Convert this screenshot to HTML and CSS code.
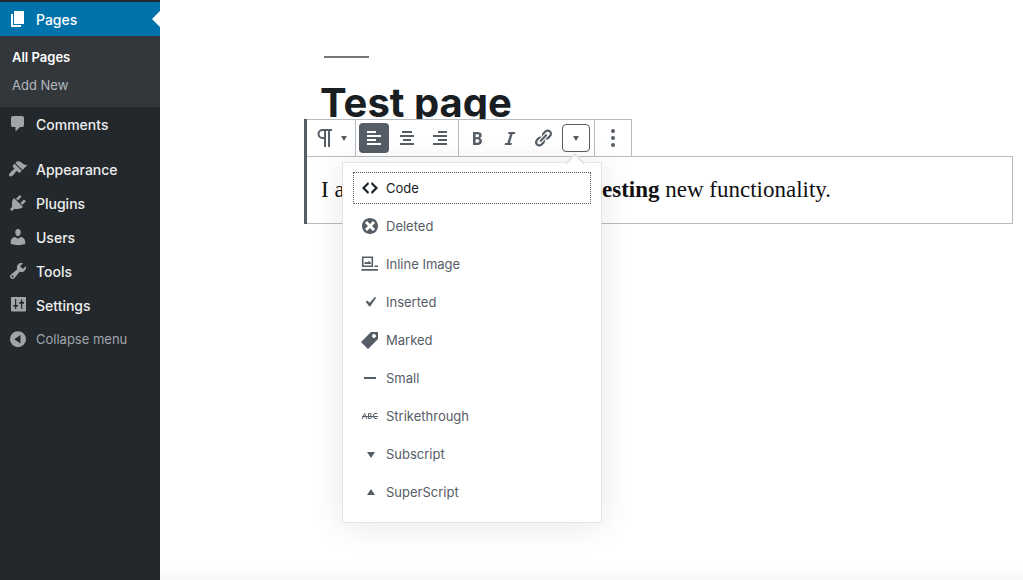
FILE: index.html
```html
<!DOCTYPE html>
<html lang="en">
<head>
<meta charset="utf-8">
<meta name="viewport" content="width=device-width, initial-scale=1">
<title>Edit Page</title>
<link rel="stylesheet" href="styles.css">
</head>
<body>
<div class="app">
  <nav class="sidebar" aria-label="Main menu">
    <a class="nav-item nav-item--current" href="#"><svg class="icon" viewBox="0 0 20 20"><path d="M6 15V2h10v13H6zm-1 1h8v2H3V5h2v11z"/></svg>Pages</a>
    <div class="submenu">
      <a class="submenu-item submenu-item--current" href="#">All Pages</a>
      <a class="submenu-item" href="#">Add New</a>
    </div>
    <a class="nav-item" href="#"><svg class="icon" viewBox="0 0 20 20"><path d="M5 2h9q.82 0 1.410.59T16 4v7q0 .82-.59 1.410T14 13h-2l-4.500 4.500V13H5q-.82 0-1.410-.59T3 11V4q0-.82.59-1.410T5 2z"/></svg>Comments</a>
    <div class="nav-gap"></div>
    <a class="nav-item" href="#"><svg class="icon" viewBox="0 0 20 20"><path d="M14.48 11.06L7.41 3.99l1.5-1.5c.5-.56 2.3-.47 3.51.32 1.21.8 1.43 1.28 2.91 2.1 1.18.64 2.45 1.26 4.45.85zm-.71.71L6.7 4.7 4.93 6.47c-.39.39-.39 1.02 0 1.41l1.06 1.06c.39.39.39 1.03 0 1.42-.6.6-1.43 1.11-2.21 1.69-.35.26-.7.53-1.01.84C1.43 14.23.4 16.08 1.4 17.07c.99 1 2.84-.03 4.18-1.36.31-.31.58-.66.85-1.02.57-.78 1.08-1.61 1.69-2.21.39-.39 1.02-.39 1.41 0l1.06 1.06c.39.39 1.02.39 1.41 0z"/></svg>Appearance</a>
    <a class="nav-item" href="#"><svg class="icon" viewBox="0 0 20 20"><path d="M13.11 4.36L9.87 7.6 8 5.73l3.24-3.24c.35-.34 1.05-.2 1.56.32.52.51.66 1.21.31 1.55zm-8 1.77l.91-1.12 9.01 9.01-1.19.84c-.71.71-2.63 1.16-3.82 1.16H6.14L4.9 17.26c-.59.59-1.54.59-2.12 0-.59-.58-.59-1.53 0-2.12l1.24-1.24v-3.88c0-1.13.4-3.19 1.09-3.89zm7.26 3.97l3.24-3.24c.34-.35 1.04-.21 1.55.31.52.51.66 1.21.31 1.55l-3.24 3.25z"/></svg>Plugins</a>
    <a class="nav-item" href="#"><svg class="icon" viewBox="0 0 20 20"><path d="M10 9.25c-2.27 0-2.73-3.44-2.73-3.44C7 4.02 7.82 2 9.97 2c2.16 0 2.98 2.02 2.71 3.81 0 0-.41 3.44-2.68 3.44zm0 2.57L12.72 10c2.39 0 4.52 2.33 4.52 4.53v2.49s-3.65 1.13-7.24 1.13c-3.65 0-7.24-1.13-7.24-1.13v-2.49c0-2.25 1.94-4.48 4.47-4.48z"/></svg>Users</a>
    <a class="nav-item" href="#"><svg class="icon" viewBox="0 0 20 20"><path d="M16.68 9.77c-1.34 1.34-3.3 1.67-4.95.99l-5.41 6.52c-.99.99-2.59.99-3.58 0s-.99-2.59 0-3.57l6.52-5.42c-.68-1.65-.35-3.61.99-4.95 1.28-1.28 3.12-1.62 4.72-1.06l-2.89 2.89 2.82 2.82 2.86-2.87c.53 1.58.18 3.39-1.08 4.65zM3.81 16.21c.4.39 1.04.39 1.43 0 .4-.4.4-1.04 0-1.43-.39-.4-1.03-.4-1.43 0-.39.39-.39 1.03 0 1.43z"/></svg>Tools</a>
    <a class="nav-item" href="#"><svg class="icon" viewBox="0 0 20 20"><path d="M4 2h13q1 0 1 1v12.500q0 1-1 1H4q-1 0-1-1V3q0-1 1-1z"/><g class="icon-cut"><path d="M7 4h1.200v6H10v1.500H8.200V14H7v-2.500H5.200V10H7zM13 14h1.200V8.500H16V7h-1.800V4.500H13V7h-1.800v1.500H13z"/><path d="M5.200 10h4.800L7.600 12.600zM11.200 8.500H16l-2.400-2.800z"/></g></svg>Settings</a>
    <button class="nav-item nav-item--collapse" type="button"><svg class="icon" viewBox="0 0 20 20"><path fill-rule="evenodd" d="M10 2.200a8 8 0 1 1 0 16 8 8 0 1 1 0-16zM12.500 6v8.400L6.300 10.200z"/></svg>Collapse menu</button>
  </nav>

  <main class="editor">
    <hr class="title-rule">
    <h1 class="title">Test page</h1>
    <section class="block">
      <div class="toolbar" role="toolbar" aria-label="Block tools">
        <div class="group group--type">
          <button class="type-button" type="button" aria-label="Change block type">
            <svg class="icon" viewBox="0 0 20 20"><path class="line line--bold" d="M17 2H7.500a4 4 0 0 0 0 8H9M10 2V19M14 2V19"/></svg>
            <svg class="caret" viewBox="0 0 6 5"><path d="M0 0h6L3 5z"/></svg>
          </button>
        </div>
        <div class="group">
          <button class="tool" type="button" aria-label="Align left" aria-pressed="true"><span class="tool-face"><svg class="icon" viewBox="0 0 20 20"><path d="M3 3h9v2H3zM3 7h14v2H3zM3 11h9v2H3zM3 15h14v2H3z"/></svg></span></button>
          <button class="tool" type="button" aria-label="Align center"><span class="tool-face"><svg class="icon" viewBox="0 0 20 20"><path d="M5 3h10v2H5zM3 7h14v2H3zM6 11h8v2H6zM3 15h14v2H3z"/></svg></span></button>
          <button class="tool" type="button" aria-label="Align right"><span class="tool-face"><svg class="icon" viewBox="0 0 20 20"><path d="M8 3h9v2H8zM3 7h14v2H3zM8 11h9v2H8zM3 15h14v2H3z"/></svg></span></button>
        </div>
        <div class="group">
          <button class="tool" type="button" aria-label="Bold"><span class="tool-face"><svg class="icon" viewBox="0 0 20 20"><path d="M6 4v13h4.540c1.370 0 2.460-.33 3.260-1 .8-.66 1.200-1.580 1.200-2.770 0-.84-.17-1.510-.51-2.010s-.9-.85-1.670-1.030v-.09c.57-.1 1.020-.4 1.360-.9s.51-1.130.51-1.910c0-1.140-.39-1.980-1.170-2.500C12.750 4.260 11.500 4 9.780 4H6zm2.570 5.150V6.260h1.360c.73 0 1.270.11 1.610.32.34.22.51.58.51 1.070 0 .54-.16.92-.47 1.150s-.82.35-1.510.35h-1.500zm0 2.190h1.600c1.440 0 2.160.53 2.160 1.610 0 .6-.17 1.050-.51 1.340s-.86.43-1.570.43H8.570v-3.380z"/></svg></span></button>
          <button class="tool" type="button" aria-label="Italic"><span class="tool-face"><svg class="icon" viewBox="0 0 20 20"><path d="M14.780 6h-2.130l-2.800 9h2.120l-.62 2H4.600l.62-2h2.140l2.800-9H8.030l.62-2h6.750z"/></svg></span></button>
          <button class="tool" type="button" aria-label="Link"><span class="tool-face"><svg class="icon" viewBox="0 0 20 20"><path d="M17.740 2.760c1.680 1.690 1.680 4.410 0 6.100l-1.530 1.520c-1.120 1.120-2.700 1.470-4.140 1.090l2.620-2.610.76-.77.76-.76c.84-.84.84-2.200 0-3.040-.84-.85-2.200-.85-3.040 0l-.77.76-3.380 3.380c-.37-1.440-.02-3.020 1.100-4.140l1.520-1.530c1.690-1.680 4.420-1.680 6.100 0zM8.590 13.430l5.340-5.340c.42-.42.42-1.100 0-1.520-.44-.43-1.130-.39-1.530 0l-5.330 5.340c-.42.42-.42 1.100 0 1.520.44.43 1.130.39 1.520 0zm-.76 2.290l4.140-4.150c.38 1.440.03 3.020-1.090 4.140l-1.520 1.530c-1.690 1.680-4.410 1.680-6.100 0-1.680-1.680-1.680-4.420 0-6.100l1.530-1.520c1.120-1.120 2.700-1.470 4.140-1.100l-4.140 4.150c-.85.84-.85 2.200 0 3.050.84.84 2.200.84 3.040 0z"/></svg></span></button>
          <div class="more-formats">
            <button class="tool tool--outlined" type="button" aria-label="More rich text controls" aria-haspopup="menu" aria-expanded="true"><span class="tool-face"><svg class="caret" viewBox="0 0 6 5"><path d="M0 0h6L3 5z"/></svg></span></button>
            <div class="menu" role="menu">
              <button class="menu-item menu-item--focus" type="button" role="menuitem"><svg class="icon" viewBox="0 0 20 20"><path d="M9 6l-4 4 4 4-1 2-6-6 6-6zm2 8l4-4-4-4 1-2 6 6-6 6z"/></svg>Code</button>
              <button class="menu-item" type="button" role="menuitem"><svg class="icon" viewBox="0 0 20 20"><path d="M10 2c4.420 0 8 3.580 8 8s-3.580 8-8 8-8-3.580-8-8 3.580-8 8-8zm5 11l-3-3 3-3-2-2-3 3-3-3-2 2 3 3-3 3 2 2 3-3 3 3z"/></svg>Deleted</button>
              <button class="menu-item" type="button" role="menuitem"><svg class="icon" viewBox="0 0 20 20"><path class="line" d="M2.700 3.200h9.600v9H2.700z"/><path d="M4.500 10V8.600l1.600-.8 1.200.8 1.700-1.600L11 9v1zM14.500 11.500H18V13h-3.500zM1.500 15H18v1.800H1.500z"/></svg>Inline Image</button>
              <button class="menu-item" type="button" role="menuitem"><svg class="icon" viewBox="0 0 20 20"><path d="M14.830 4.890l1.340.94-5.810 8.380H9.020L5.780 9.670l1.340-1.250 2.570 2.400z"/></svg>Inserted</button>
              <button class="menu-item" type="button" role="menuitem"><svg class="icon" viewBox="0 0 20 20"><path d="M11 2h7v7L8 19l-7-7zm3 6c1.100 0 2-.9 2-2s-.9-2-2-2-2 .9-2 2 .9 2 2 2z"/></svg>Marked</button>
              <button class="menu-item" type="button" role="menuitem"><svg class="icon" viewBox="0 0 20 20"><path d="M4 9h12v2H4z"/></svg>Small</button>
              <button class="menu-item" type="button" role="menuitem"><svg class="icon" viewBox="0 0 20 20"><path class="line line--thin" d="M2.300 13L4.600 7.500 6.900 13M8.500 7.500V12.500H10Q11.500 12.500 11.500 11.200 11.500 10 10.200 10 11.200 9.700 11.200 8.700 11.200 7.500 10 7.500zM17.300 7.500H15Q13.500 7.500 13.500 10T15 12.500H17.300M2 10.500H18"/></svg>Strikethrough</button>
              <button class="menu-item" type="button" role="menuitem"><svg class="icon" viewBox="0 0 20 20"><path d="M7 8h8l-4 6z"/></svg>Subscript</button>
              <button class="menu-item" type="button" role="menuitem"><svg class="icon" viewBox="0 0 20 20"><path d="M7 13h8l-4-6z"/></svg>SuperScript</button>
            </div>
          </div>
        </div>
        <div class="group group--options">
          <button class="options" type="button" aria-label="More options"><svg class="icon" viewBox="0 0 20 20"><circle cx="10" cy="3" r="2"/><circle cx="10" cy="10" r="2"/><circle cx="10" cy="17" r="2"/></svg></button>
        </div>
      </div>
      <p class="paragraph">I am writing a text paragraph <strong>testing</strong> new functionality.</p>
    </section>
  </main>
</div>
</body>
</html>
```
FILE: styles.css
```css
* { box-sizing: border-box; }

body {
  margin: 0;
  font-family: Inter, "Liberation Sans", sans-serif;
  font-size: 13px;
  color: #191e23;
  background: #fff;
}

button {
  margin: 0;
  padding: 0;
  border: 0;
  background: none;
  color: inherit;
  font: inherit;
}

.app { display: flex; min-height: 100vh; }

.icon { display: block; flex: none; width: 20px; height: 20px; fill: currentColor; }
.caret { display: block; width: 6px; height: 5px; fill: currentColor; }
.line { fill: none; stroke: currentColor; stroke-width: 1.6; }
.line--thin { stroke-width: 1; }
.line--bold { stroke-width: 2; }
.icon-cut { fill: #23282d; }

/* Sidebar */
.sidebar {
  flex: none;
  width: 160px;
  padding-top: 2px;
  background: #23282d;
}
.nav-item {
  position: relative;
  display: flex;
  align-items: center;
  gap: 8px;
  width: 100%;
  height: 34px;
  padding-left: 8px;
  color: #eee;
  font-size: 14px;
  font-weight: 500;
  text-decoration: none;
}
.nav-item .icon { color: #a0a5aa; }
.nav-item--current { background: #0073aa; color: #fff; }
.nav-item--current .icon { color: #fff; }
.nav-item--current::after {
  content: "";
  position: absolute;
  top: 9px;
  right: 0;
  border: 8px solid transparent;
  border-left-width: 0;
  border-right-color: #fff;
}
.nav-item--collapse { color: #a0a5aa; font-size: 13px; font-weight: 400; }
.nav-gap { height: 11px; }
.submenu {
  padding: 7px 12px 8px;
  background: #32373c;
}
.submenu-item {
  display: block;
  color: #b4b9be;
  font-size: 13px;
  line-height: 28px;
  text-decoration: none;
}
.submenu-item--current { color: #fff; font-weight: 600; }

/* Editor */
.editor {
  flex: 1;
  min-width: 0;
  padding: 56px 10px 0 144px;
  background: linear-gradient(to top, #f8f8f8, #fff 18px);
}
.title-rule { width: 45px; height: 2px; margin: 0 0 0 20px; border: 0; background: #767676; }
.title {
  height: 61px;
  margin: 0;
  padding: 18px 0 0 16px;
  font-size: 40px;
  font-weight: 700;
  line-height: 54px;
}
.block { position: relative; border-left: 3px solid #555d66; }

.toolbar {
  display: flex;
  width: max-content;
  border: 1px solid #b5bcc2;
  border-width: 1px 1px 0 0;
  background: #fff;
  color: #555d66;
}
.group {
  display: flex;
  align-items: center;
  height: 36px;
  padding: 0 2px 0 1px;
  border-left: 1px solid #b5bcc2;
}
.group--type { padding: 0; border-left: 0; }
.group--options { padding: 0; }
.type-button {
  display: flex;
  align-items: center;
  gap: 6px;
  width: 48px;
  height: 36px;
  padding-left: 8px;
}
.tool {
  display: flex;
  align-items: center;
  justify-content: center;
  width: 33px;
  height: 36px;
}
.tool-face {
  display: flex;
  align-items: center;
  justify-content: center;
  width: 30px;
  height: 30px;
  border-radius: 4px;
}
.tool[aria-pressed="true"] .tool-face { background: #555d66; color: #fff; }
.tool--outlined .tool-face {
  width: 28px;
  height: 28px;
  border: 1px solid #555d66;
}
.options { display: flex; align-items: center; justify-content: center; width: 36px; height: 36px; }

.paragraph {
  margin: 0;
  padding: 16px 14px;
  border: 1px solid #b5bcc2;
  border-left: 0;
  color: #111;
  font-family: "Liberation Serif", serif;
  font-size: 23px;
  line-height: 34px;
  white-space: nowrap;
}

/* Format menu */
.more-formats { position: relative; }
.menu {
  position: absolute;
  top: calc(100% + 6px);
  right: -10px;
  z-index: 1;
  display: flex;
  flex-direction: column;
  gap: 6px;
  width: 260px;
  padding: 9px 10px 14px;
  border: 1px solid #e2e4e7;
  background: #fff;
  box-shadow: 0 3px 30px rgba(25, 30, 35, 0.1);
}
.menu::before {
  content: "";
  position: absolute;
  top: -7px;
  right: 19px;
  width: 12px;
  height: 12px;
  border: 2px solid #e2e4e7;
  border-width: 2px 0 0 2px;
  background: #fff;
  transform: rotate(45deg);
}
.menu-item {
  position: relative;
  display: flex;
  align-items: center;
  gap: 6px;
  height: 32px;
  padding-left: 6px;
  border: 1px solid transparent;
  text-align: left;
}
.menu-item--focus { border: 1px dotted #555d66; color: #191e23; }
```
